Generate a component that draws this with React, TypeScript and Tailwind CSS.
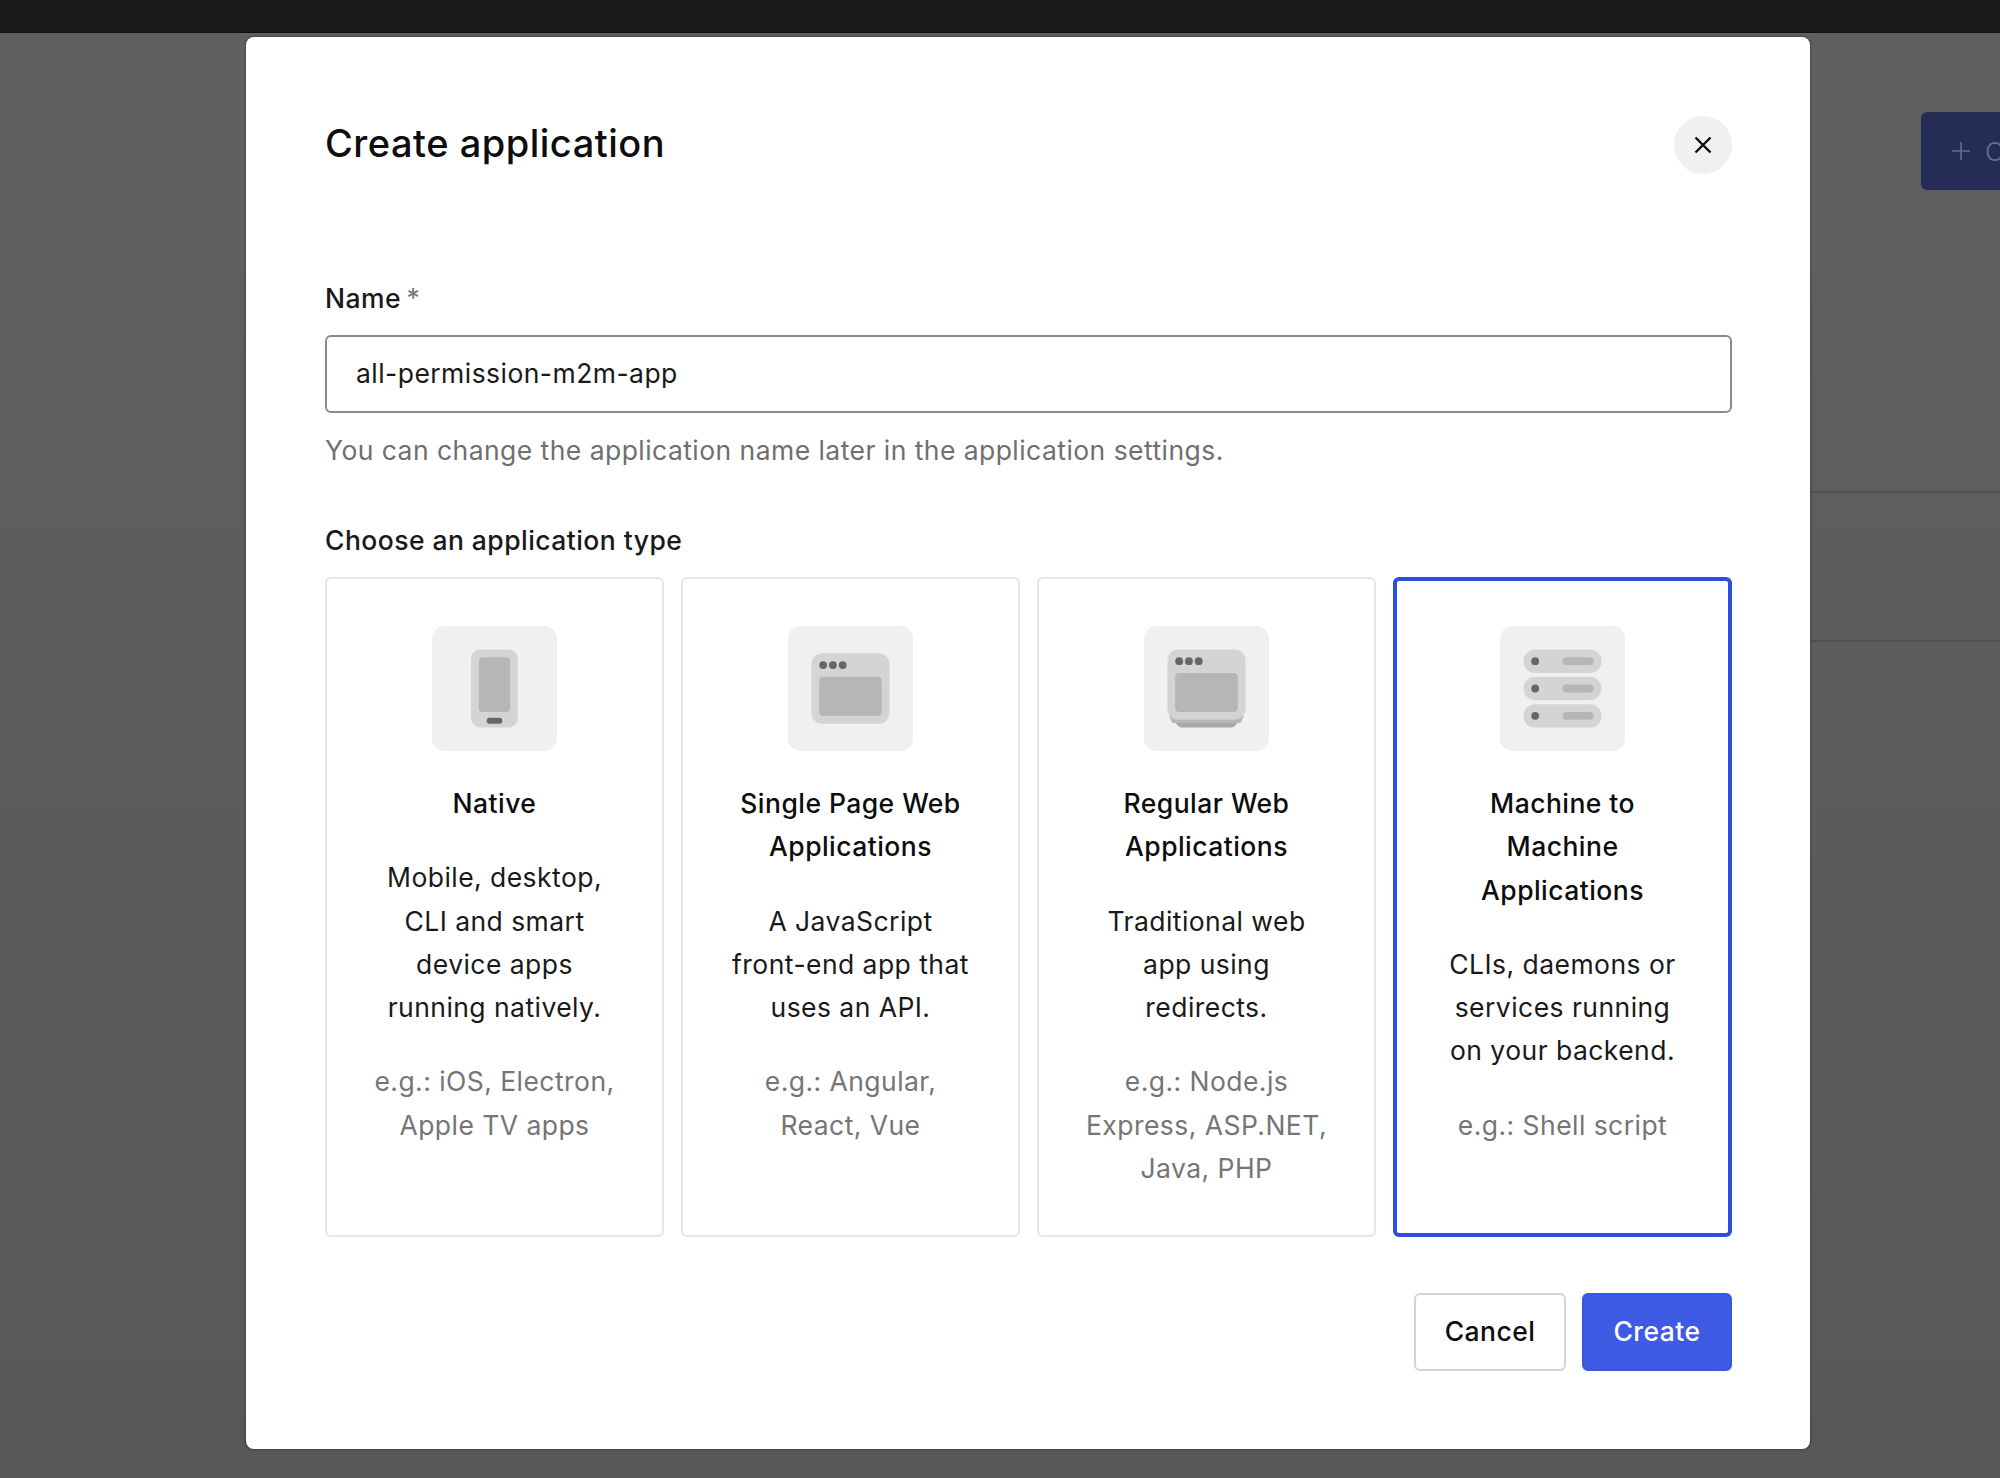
const OUTER = '#d4d4d4'
const INNER = '#b6b6b6'
const DOT = '#666666'

function IconBox({ children }: { children: React.ReactNode }) {
  return (
    <svg viewBox="0 0 16 16" className="mx-auto block h-[125px] w-[125px]">
      <rect width="16" height="16" rx="1.6" fill="#f0f0f0" />
      {children}
    </svg>
  )
}

function PhoneIcon() {
  return (
    <IconBox>
      <rect x="5" y="3" width="6" height="10" rx="1.2" fill={OUTER} />
      <rect x="6" y="4" width="4" height="7" rx="0.5" fill={INNER} />
      <rect x="7" y="11.75" width="2" height="0.75" rx="0.37" fill={DOT} />
    </IconBox>
  )
}

function Dots({ y }: { y: number }) {
  return (
    <>
      <circle cx="4.5" cy={y} r="0.5" fill={DOT} />
      <circle cx="5.75" cy={y} r="0.5" fill={DOT} />
      <circle cx="7" cy={y} r="0.5" fill={DOT} />
    </>
  )
}

function BrowserIcon() {
  return (
    <IconBox>
      <rect x="3" y="3.5" width="10" height="9" rx="1.4" fill={OUTER} />
      <rect x="4" y="6.5" width="8" height="5" rx="0.5" fill={INNER} />
      <Dots y={5} />
    </IconBox>
  )
}

function WebIcon() {
  return (
    <IconBox>
      <path d="M3.5 11.5h9l-.7 1.1c-.2.3-.5.4-.8.4H5c-.3 0-.6-.1-.8-.4z" fill="#a8a8a8" />
      <path d="M3.2 11.5h9.6l-.45.9H3.65z" fill={INNER} />
      <rect x="3" y="3" width="10" height="9" rx="1.4" fill={OUTER} />
      <rect x="4" y="6" width="8" height="5" rx="0.5" fill={INNER} />
      <Dots y={4.5} />
    </IconBox>
  )
}

function ServerIcon() {
  return (
    <IconBox>
      {[3, 6.5, 10].map(y => (
        <g key={y}>
          <rect x="3" y={y} width="10" height="3" rx="1.5" fill={OUTER} />
          <circle cx="4.5" cy={y + 1.5} r="0.5" fill={DOT} />
          <rect x="8" y={y + 1} width="4" height="1" rx="0.5" fill={INNER} />
        </g>
      ))}
    </IconBox>
  )
}

const appTypes = [
  {
    title: 'Native',
    desc: 'Mobile, desktop,\nCLI and smart\ndevice apps\nrunning natively.',
    eg: 'e.g.: iOS, Electron,\nApple TV apps',
    icon: <PhoneIcon />,
  },
  {
    title: 'Single Page Web\nApplications',
    desc: 'A JavaScript\nfront-end app that\nuses an API.',
    eg: 'e.g.: Angular,\nReact, Vue',
    icon: <BrowserIcon />,
  },
  {
    title: 'Regular Web\nApplications',
    desc: 'Traditional web\napp using\nredirects.',
    eg: 'e.g.: Node.js\nExpress, ASP.NET,\nJava, PHP',
    icon: <WebIcon />,
  },
  {
    title: 'Machine to\nMachine\nApplications',
    desc: 'CLIs, daemons or\nservices running\non your backend.',
    eg: 'e.g.: Shell script',
    icon: <ServerIcon />,
    selected: true,
  },
]

export default function App() {
  return (
    <div className="relative h-[1478px] w-full overflow-hidden bg-gradient-to-b from-[#606060] to-[#585858] font-['Inter',sans-serif] tracking-[0.45px]">
      <div className="h-[33px] border-b border-[#111111] bg-[#1a1a1a]" />

      {/* dimmed page behind the dialog */}
      <div className="flex justify-end pt-[79px]">
        <div className="flex h-[78px] w-[79px] items-center gap-[14px] overflow-hidden rounded-l-[6px] bg-[#252d57] pl-[30px] text-[26px] font-light text-[#5a5f78]">
          <svg viewBox="0 0 20 20" className="h-[20px] w-[20px] shrink-0" fill="none" stroke="#6a6d80" strokeWidth={1.6}>
            <path d="M10 1v18M1 10h18" />
          </svg>
          <span className="text-[#6a6d80]">C</span>
        </div>
      </div>
      <div className="ml-[500px] mt-[301px] h-[151px] border-y-2 border-[#4f4f4f]" />

      <div className="absolute left-[246px] top-[37px] w-[1564px] rounded-[8px] bg-white pb-[78px] pl-[79px] pr-[78px] pt-[79px] shadow-[0_0_3px_rgba(0,0,0,0.5)]">
        <div className="flex items-center justify-between">
          <h2 className="pb-[4px] text-[38px] font-medium leading-[54px] tracking-[0.5px] text-[#0d0d0d]">Create application</h2>
          <button className="flex h-[58px] w-[58px] items-center justify-center rounded-full bg-[#f0f0f0]">
            <svg viewBox="0 0 18 18" className="h-[18px] w-[18px]" fill="none" stroke="#0d0d0d" strokeWidth={2.4}>
              <path d="M1.5 1.5l15 15M16.5 1.5l-15 15" />
            </svg>
          </button>
        </div>

        <label className="mt-[107px] block text-[26.5px] font-medium leading-[34px] text-[#191919]">
          Name <span className="-ml-[2px] font-normal text-[#757575]">*</span>
        </label>
        <div className="mt-[20px] flex h-[78px] items-center rounded-[6px] border-2 border-[#8a8a8a] px-[29px] text-[26.5px] text-[#191919]">
          all-permission-m2m-app
        </div>
        <p className="mt-[16px] text-[26.5px] leading-[43px] text-[#6f6f6f]">
          You can change the application name later in the application settings.
        </p>

        <div className="mt-[51px] text-[26.5px] font-medium leading-[34px] text-[#191919]">Choose an application type</div>
        <div className="mt-[20px] grid grid-cols-4 gap-[17px]">
          {appTypes.map(t => (
            <div
              key={t.title}
              className={`h-[660px] rounded-[6px] text-center text-[26.5px] leading-[43.3px] ${
                t.selected ? 'border-4 border-[#2d4fe0] pt-[45px]' : 'border-2 border-[#e6e6e6] pt-[47px]'
              }`}
            >
              {t.icon}
              <div className="mt-[31px] whitespace-pre-line font-medium text-[#0d0d0d]">{t.title}</div>
              <div className="mt-[31px] whitespace-pre-line text-[#191919]">{t.desc}</div>
              <div className="mt-[31px] whitespace-pre-line text-[#757575]">{t.eg}</div>
            </div>
          ))}
        </div>

        <div className="mt-[56px] flex justify-end gap-[16px]">
          <button className="h-[78px] w-[152px] rounded-[6px] border-2 border-[#d4d4d4] bg-white text-[26.5px] font-medium text-[#0d0d0d]">
            Cancel
          </button>
          <button className="h-[78px] w-[150px] rounded-[6px] border-2 border-[#3557e3] bg-[#3f5ae3] text-[26.5px] font-medium text-white">
            Create
          </button>
        </div>
      </div>
    </div>
  )
}
